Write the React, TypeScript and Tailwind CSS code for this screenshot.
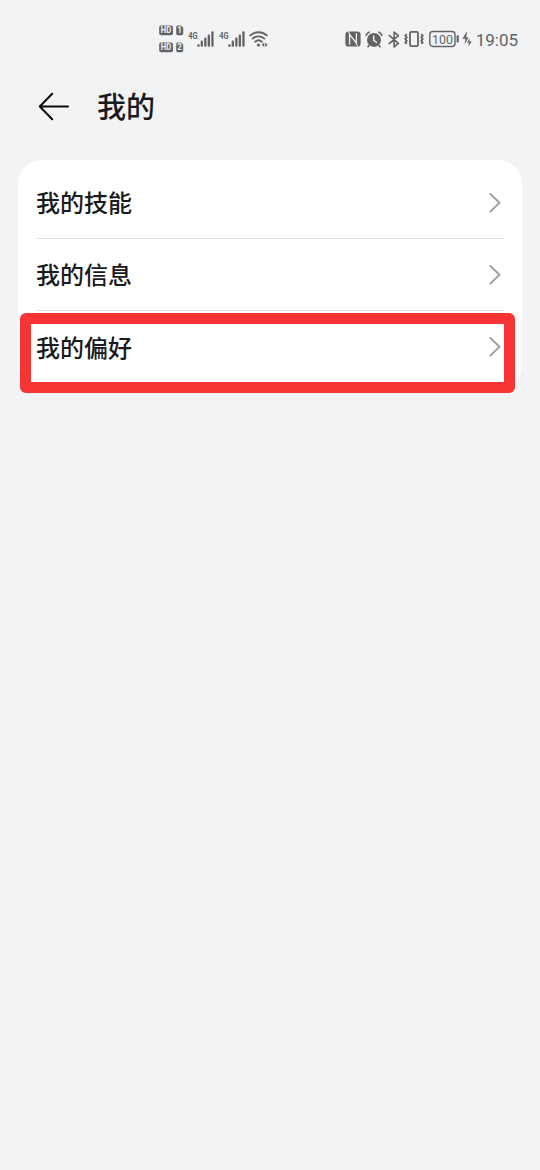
import type { ReactNode } from "react";

const menuItems = ["我的技能", "我的信息", "我的偏好"];

// HD 卡槽标识
function HdBadge({ slot }: { slot: string }) {
  return (
    <svg width="25" height="11" viewBox="0 0 25 11" className="block">
      <rect x="0.2" y="0.4" width="13.8" height="9.8" rx="2" fill="#626365" />
      <text x="7.1" y="8.3" textAnchor="middle" fontSize="8.2" fontWeight="700" fill="#f1f3f5" textLength="10.5" lengthAdjust="spacingAndGlyphs">
        HD
      </text>
      <path d="M17.2 2a1.6 1.6 0 0 1 1.6-1.6H22l2.2 2.2v6a1.6 1.6 0 0 1-1.6 1.6h-3.8a1.6 1.6 0 0 1-1.6-1.6z" fill="#626365" />
      <text x="20.7" y="8.3" textAnchor="middle" fontSize="8.2" fontWeight="700" fill="#f1f3f5">
        {slot}
      </text>
    </svg>
  );
}

function Signal() {
  return (
    <svg width="27" height="18" viewBox="0 0 27 18" className="block" fill="#626365">
      <text x="0.3" y="9" fontSize="9.5" fontWeight="700" textLength="9.4" lengthAdjust="spacingAndGlyphs">
        4G
      </text>
      <rect x="9.2" y="14.2" width="2.5" height="2.5" rx="1" />
      <rect x="12.7" y="10.4" width="2.3" height="6.3" rx="1" />
      <rect x="16.2" y="7.5" width="2.3" height="9.2" rx="1" />
      <rect x="19.7" y="4.6" width="2.3" height="12.1" rx="1" />
      <rect x="23.3" y="1.3" width="2.3" height="15.4" rx="1" />
    </svg>
  );
}

function Wifi() {
  return (
    <svg width="20" height="18" viewBox="0 0 20 18" className="block" fill="none" stroke="#626365" strokeWidth="1.9" strokeLinecap="round">
      <path d="M1.2 5.4a12.4 12.4 0 0 1 16.6 0" />
      <path d="M3.7 8.6a8.7 8.7 0 0 1 11.6 0" />
      <path d="M6.2 11.7a5 5 0 0 1 6.6 0" />
      <circle cx="9.4" cy="15" r="1.6" fill="#626365" stroke="none" />
      <path d="M15.2 12.4v4.6l-2.4-2.3zM16.2 12.4v4.6l2.4-2.3z" fill="#626365" stroke="none" />
    </svg>
  );
}

function Nfc() {
  return (
    <svg width="16" height="16" viewBox="0 0 16 16" className="block">
      <rect x="0.4" y="0.4" width="15.2" height="15.2" rx="3.2" fill="#626365" />
      <path d="M4.6 13.8V3.6l6.8 8.4V2.2" fill="none" stroke="#f1f3f5" strokeWidth="1.3" />
      <path d="M4.9 3.8L3.2 0.2M11.1 12.2l1.9 3.6" stroke="#f1f3f5" strokeWidth="1" />
    </svg>
  );
}

function Alarm() {
  return (
    <svg width="18" height="17" viewBox="0 0 18 17" className="block" fill="none" strokeLinecap="round">
      <circle cx="9" cy="8.9" r="7" fill="#626365" />
      <path d="M1.2 4.2c.5-1.4 1.4-2.4 2.8-3M16.8 4.2c-.5-1.4-1.4-2.4-2.8-3M4.2 14.2l-1.2 1.4M13.8 14.2l1.2 1.4" stroke="#626365" strokeWidth="1.7" />
      <path d="M8.7 5v4.3l2.7 2" stroke="#f1f3f5" strokeWidth="1.4" />
    </svg>
  );
}

function Bluetooth() {
  return (
    <svg width="12" height="17" viewBox="0 0 12 17" className="block" fill="none" stroke="#626365" strokeWidth="1.6" strokeLinejoin="round" strokeLinecap="round">
      <path d="M1.2 4.4l9.2 7.9-4.3 3.6V1.1l4.3 3.6-9.2 7.9" />
    </svg>
  );
}

function Vibrate() {
  return (
    <svg width="20" height="16" viewBox="0 0 20 16" className="block" fill="none" stroke="#626365" strokeWidth="1.8" strokeLinejoin="round">
      <rect x="6" y="0.9" width="8" height="14.2" rx="1.3" />
      <path d="M2.8 3l-1.6 1.7 1.6 1.7-1.6 1.7 1.6 1.7-1.6 1.7 1.6 1.3M17.2 3l1.6 1.7-1.6 1.7 1.6 1.7-1.6 1.7 1.6 1.7-1.6 1.3" strokeWidth="1.8" />
    </svg>
  );
}

function Battery() {
  return (
    <svg width="44" height="18" viewBox="0 0 44 18" className="block">
      <rect x="0.8" y="1.5" width="25.2" height="15" rx="3" fill="none" stroke="#626365" strokeWidth="1.4" />
      <text x="13.4" y="13.8" textAnchor="middle" fontSize="13.5" fill="#626365" textLength="21" lengthAdjust="spacingAndGlyphs">
        100
      </text>
      <rect x="27.6" y="5.3" width="2.2" height="7.2" rx="0.8" fill="#626365" />
      <path d="M38.2 1l-4.8 7.8h3l-.8 5.4 4-6.8h-2.4z" fill="#626365" />
      <path d="M40.6 8.2l-2.5 4.6h1.8l-.5 4 3.2-5.4h-2z" fill="#626365" />
    </svg>
  );
}

function Chevron() {
  return (
    <svg width="12" height="20" viewBox="0 0 12 20" className="block" fill="none" stroke="#a0a1a2" strokeWidth="2" strokeLinecap="round" strokeLinejoin="round">
      <path d="M1.3 1l9.2 8.8-9.2 8.8" />
    </svg>
  );
}

function Row({ children, last }: { children: ReactNode; last?: boolean }) {
  return (
    <div className={last ? "flex h-[72px] items-center justify-between" : "flex h-[72px] items-center justify-between border-b border-[#e3e3e4]"}>
      <span className="pt-[3px] text-[24px] leading-9 font-medium text-[#191a1b]">{children}</span>
      <span className="mr-[3px]">
        <Chevron />
      </span>
    </div>
  );
}

export default function App() {
  return (
    <div className="min-h-screen bg-[#f1f3f5] font-[Roboto,'Noto_Sans_CJK_SC',sans-serif]">
      {/* 状态栏 */}
      <div className="flex h-[78px] items-center justify-between pr-[22px] pl-[159px]">
        <div className="flex items-center">
          <div className="flex flex-col gap-[6px]">
            <HdBadge slot="1" />
            <HdBadge slot="2" />
          </div>
          <div className="ml-1 flex items-center gap-[3.5px]">
            <Signal />
            <Signal />
          </div>
          <div className="ml-[3px]">
            <Wifi />
          </div>
        </div>
        <div className="flex items-center">
          <Nfc />
          <div className="ml-1">
            <Alarm />
          </div>
          <div className="ml-[5px]">
            <Bluetooth />
          </div>
          <div className="ml-[4px]">
            <Vibrate />
          </div>
          <div className="ml-[5px]">
            <Battery />
          </div>
          <span className="mt-[2px] ml-[2.5px] text-[17px] leading-5 text-[#626365]">19:05</span>
        </div>
      </div>

      {/* 标题栏 */}
      <header className="flex h-[82px] items-start pt-[6px] pl-[38px]">
        <svg width="32" height="30" viewBox="0 0 32 30" className="mt-[7px] block" fill="none" stroke="#0b0b0c" strokeWidth="2" strokeLinecap="round" strokeLinejoin="round">
          <path d="M30 15.5H1.8M14.2 2.8L1.8 15.5l12.4 12.7" />
        </svg>
        <h1 className="mt-[2px] ml-[27px] text-[29px] leading-[44px] font-medium text-[#191a1b]">我的</h1>
      </header>

      {/* 菜单列表 */}
      <main className="relative mx-[18px] rounded-[24px] bg-white px-[18px] pt-[7px] pb-[6px]">
        {menuItems.map((item, i) => (
          <Row key={item} last={i === menuItems.length - 1}>
            {item}
          </Row>
        ))}
        {/* 高亮框 */}
        <div className="absolute top-[152.5px] left-[2.4px] h-[80.5px] w-[495px] overflow-hidden rounded-[6px]">
          <div className="h-full w-full border-[11px] border-[#f63433]" />
        </div>
      </main>
    </div>
  );
}
